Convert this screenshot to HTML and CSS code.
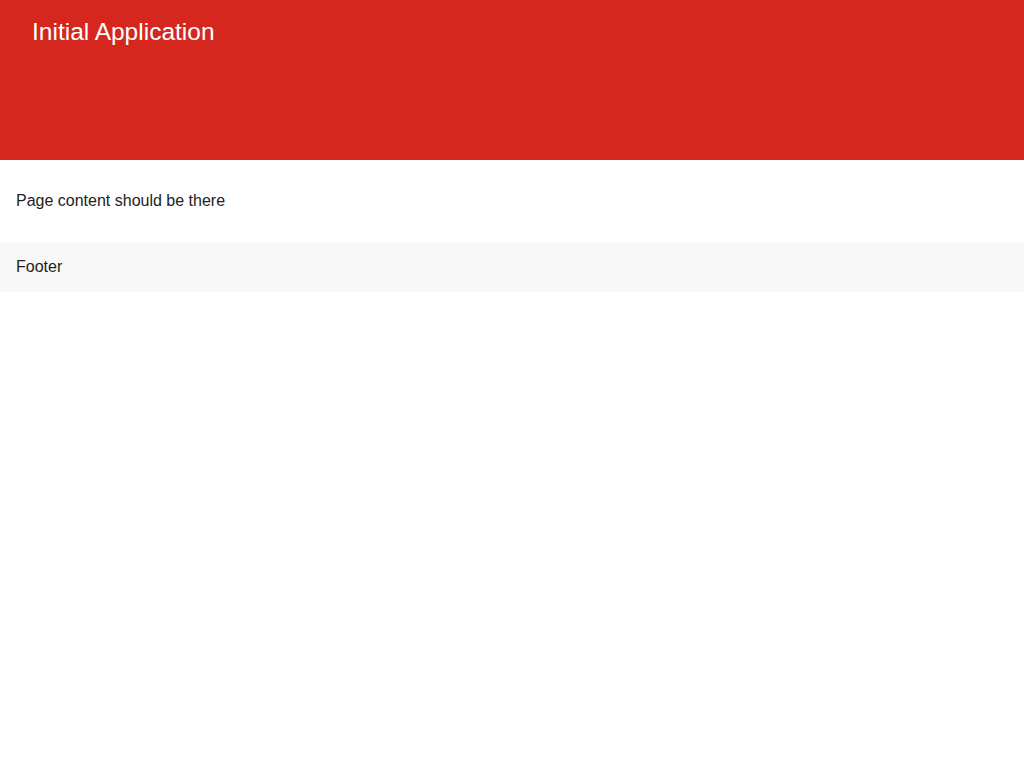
FILE: index.html
```html
<!DOCTYPE html>
<html>
<head>
<meta charset="utf-8">
<link rel="stylesheet" href="styles.css">
</head>
<body>
<header class="header"><h1 class="title">Initial Application</h1></header>
<main class="content"><p class="text">Page content should be there</p></main>
<footer class="footer">Footer</footer>
</body>
</html>
```
FILE: styles.css
```css
html, body { margin: 0; padding: 0; background: #fff; }
body { font-family: "Liberation Sans", Arial, Helvetica, sans-serif; color: #222; font-size: 16px; line-height: 20px; }
.header { background: #d5271e; height: 160px; box-sizing: border-box; padding: 18px 32px; }
.title { margin: 0; font-size: 24.5px; line-height: 28px; font-weight: normal; color: #fff; }
.content { padding: 15px 16px 16px; }
.text { margin: 16px 0 15px; }
.footer { background: #f8f8f8; padding: 15px 16px; }
```
